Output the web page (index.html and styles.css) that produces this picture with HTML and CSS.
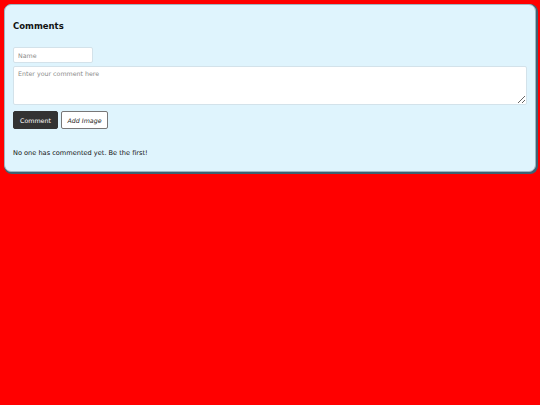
FILE: index.html
```html
<!DOCTYPE html>
<html>
<head>
<meta charset="utf-8">
<link rel="stylesheet" href="styles.css">
</head>
<body>
<section class="card">
  <h2 class="title">Comments</h2>
  <form class="form">
    <input class="name" type="text" placeholder="Name">
    <textarea class="comment" placeholder="Enter your comment here"></textarea>
    <div class="actions">
      <button type="button" class="btn btn-dark">Comment</button>
      <button type="button" class="btn btn-light">Add Image</button>
    </div>
  </form>
  <p class="empty">No one has commented yet. Be the first!</p>
</section>
</body>
</html>
```
FILE: styles.css
```css
html, body {
  margin: 0;
  background: #ff0000;
  height: 100%;
}
body {
  padding: 4px;
  box-sizing: border-box;
  font-family: "DejaVu Sans", "Open Sans", sans-serif;
  color: #111;
}
.card {
  background: #dff4fd;
  border: 1px solid #9fb6c2;
  border-radius: 7px;
  box-shadow: 1px 1px 0 1px #3f6273;
  padding: 8px;
  height: 168px;
  box-sizing: border-box;
}
.title {
  font-size: 8.5px;
  font-weight: bold;
  margin: 7px 0 0 0;
  line-height: 12px;
}
.form {
  margin-top: 15px;
  display: flex;
  flex-direction: column;
  gap: 3px;
}
.name, .comment {
  font-family: inherit;
  font-size: 6.3px;
  border: 1px solid #d3e2ea;
  border-radius: 2px;
  background: #fff;
  box-sizing: border-box;
  padding: 3px 4px;
  outline: none;
}
.name::placeholder, .comment::placeholder { color: #8a8a8a; }
.name { width: 80px; height: 16px; }
.comment { width: 514px; height: 39px; resize: vertical; }
.actions {
  display: flex;
  gap: 3px;
  margin-top: 3px;
}
.btn {
  font-family: inherit;
  font-size: 6.3px;
  height: 18px;
  border-radius: 2px;
  padding: 0;
  white-space: nowrap;
  cursor: pointer;
}
.btn-dark {
  background: #333;
  color: #fff;
  border: 1px solid #333;
  width: 45px;
}
.btn-light {
  background: #fff;
  color: #222;
  border: 1px solid #777;
  font-style: italic;
  width: 47px;
}
.empty {
  font-size: 6.6px;
  margin: 19px 0 0 0;
  line-height: 10px;
}
```
